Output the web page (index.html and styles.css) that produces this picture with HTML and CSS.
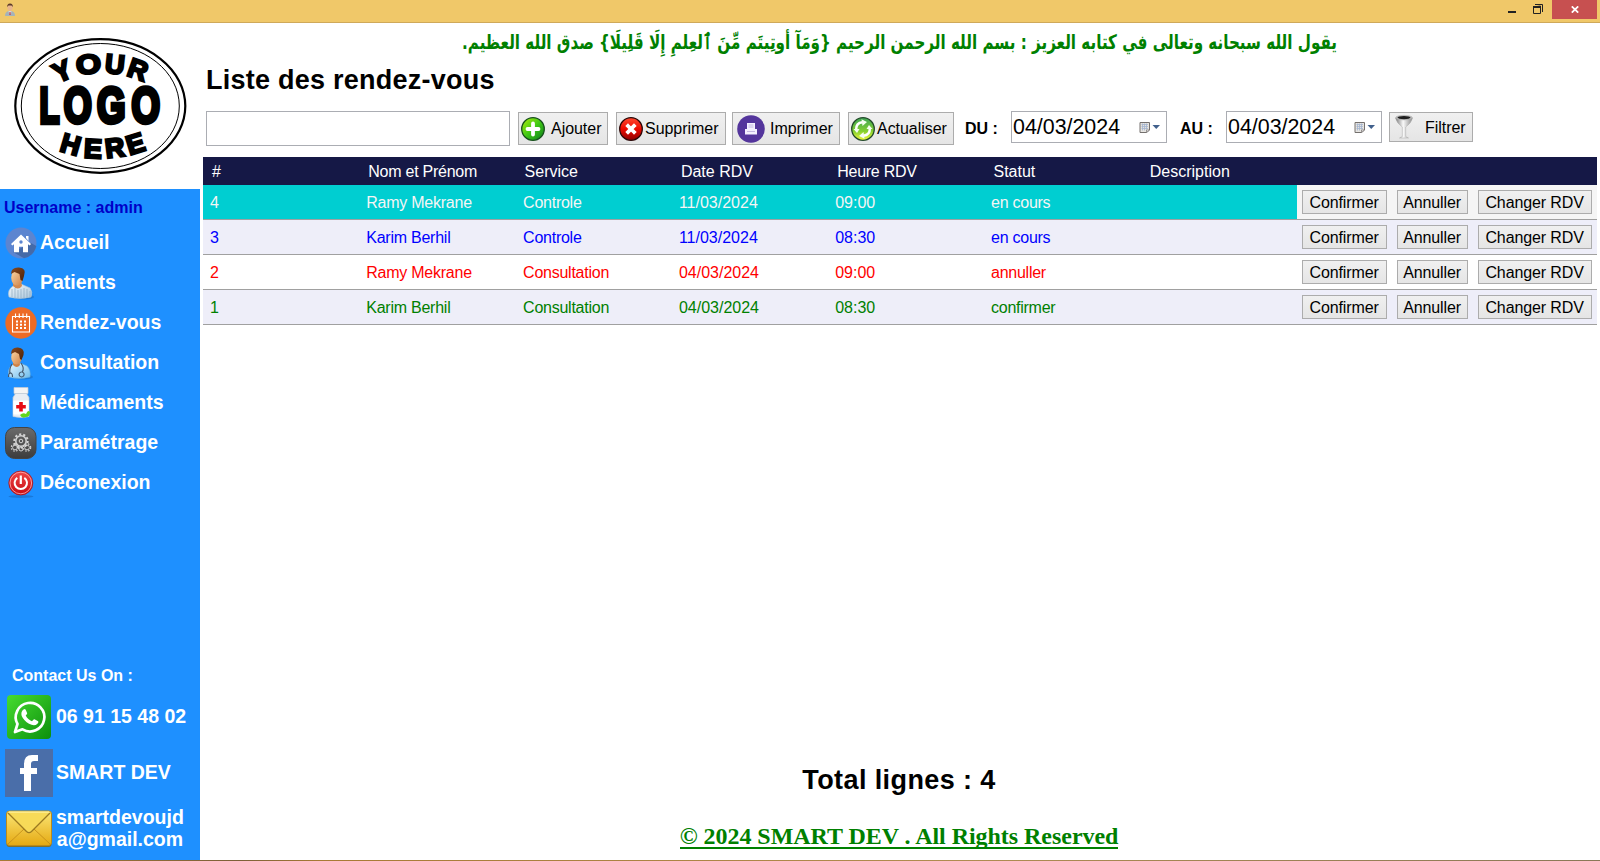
FILE: index.html
```html
<!DOCTYPE html>
<html lang="fr">
<head>
<meta charset="utf-8">
<title>Liste des rendez-vous</title>
<link rel="stylesheet" href="styles.css">
</head>
<body>
<svg class="defs" width="0" height="0" aria-hidden="true">
  <defs>
    <linearGradient id="skin" x1="0" y1="0" x2="1" y2="1"><stop offset="0" stop-color="#fbd9a8"/><stop offset="1" stop-color="#cf8046"/></linearGradient>
    <linearGradient id="hair" x1="0" y1="0" x2="1" y2="1"><stop offset="0" stop-color="#8a4a1e"/><stop offset="1" stop-color="#4a2008"/></linearGradient>
    <linearGradient id="gown" x1="0" y1="0" x2="1" y2="1"><stop offset="0" stop-color="#f4f8fb"/><stop offset="1" stop-color="#a9c6dc"/></linearGradient>
    <linearGradient id="coat" x1="0" y1="0" x2="1" y2="1"><stop offset="0" stop-color="#e6f6ff"/><stop offset="1" stop-color="#6dbcec"/></linearGradient>
    <linearGradient id="dark" x1="0" y1="0" x2="0" y2="1"><stop offset="0" stop-color="#6b6b6b"/><stop offset="1" stop-color="#3c3c3c"/></linearGradient>
    <linearGradient id="red" x1="0" y1="0" x2="0" y2="1"><stop offset="0" stop-color="#f04a4a"/><stop offset="1" stop-color="#c80a12"/></linearGradient>
    <linearGradient id="wa" x1="0" y1="0" x2="1" y2="1"><stop offset="0" stop-color="#46dc30"/><stop offset="1" stop-color="#0c8f0c"/></linearGradient>
    <linearGradient id="mail" x1="0" y1="0" x2="0" y2="1"><stop offset="0" stop-color="#fbe676"/><stop offset="1" stop-color="#e5a912"/></linearGradient>
    <linearGradient id="add" x1="0" y1="0" x2="1" y2="1"><stop offset="0" stop-color="#b4ee10"/><stop offset=".5" stop-color="#3fc814"/><stop offset="1" stop-color="#0a7a1c"/></linearGradient>
    <linearGradient id="del" x1="0" y1="0" x2="0" y2="1"><stop offset="0" stop-color="#ff4a30"/><stop offset=".5" stop-color="#ee0a00"/><stop offset="1" stop-color="#8c0000"/></linearGradient>
    <linearGradient id="ref" x1="0" y1="0" x2="0" y2="1"><stop offset="0" stop-color="#3da455"/><stop offset=".6" stop-color="#84d030"/><stop offset="1" stop-color="#f2fb3c"/></linearGradient>
    <linearGradient id="steel" x1="0" y1="0" x2="1" y2="0"><stop offset="0" stop-color="#777"/><stop offset=".45" stop-color="#fafafa"/><stop offset="1" stop-color="#8a8a8a"/></linearGradient>
    <symbol id="calendar" viewBox="0 0 21 13">
      <path d="M1 1.500h9.500v7.500l-3 2.500H1z" fill="#e6e4e0" stroke="#74706e"/>
      <path d="M2.500 3.500h6.500M2.500 5.500h6.500M2.500 7.500h6.500M3.500 2.500v7M5.500 2.500v7M7.500 2.500v6" stroke="#a3b4cf" stroke-width=".8"/>
      <path d="M7.500 11.500v-2.500h3z" fill="#fff" stroke="#74706e" stroke-width=".7"/>
      <path d="M13.500 4h7.500l-3.750 4z" fill="#41608c"/>
    </symbol>
  </defs>
</svg>

<header class="titlebar">
  <svg class="app-icon" width="10" height="14" viewBox="0 0 10 14">
    <path d="M0 13q0-5 5-5t5 5z" fill="#a5b3ba"/><path d="M3.500 8.500h3L5 12z" fill="#fff"/><path d="M5 9v3" stroke="#b02a3c" stroke-width="1.200"/>
    <ellipse cx="5" cy="4.500" rx="2.600" ry="3.400" fill="#e9b68c"/><path d="M2.200 4Q2 .5 5 .4T7.800 4L6.500 2.500H3.500z" fill="#5c3a2a"/>
  </svg>
  <div class="window-controls">
    <svg width="8" height="22" viewBox="0 0 8 22"><rect y="11" width="8" height="2" fill="#222"/></svg>
    <svg class="restore" width="10" height="22" viewBox="0 0 10 22"><path d="M2 4.500h7.500V12" fill="none" stroke="#222"/><path d="M.5 7v6.500h7V6z" fill="none" stroke="#222"/><path d="M0 7h8" stroke="#222" stroke-width="2"/></svg>
    <span class="close"><svg width="8" height="7" viewBox="0 0 8 7"><path d="M.8.4l6.400 6.200M7.200.4L.8 6.600" stroke="#fff" stroke-width="1.800"/></svg></span>
  </div>
</header>

<div class="app">
  <aside class="sidebar">
    <div class="logo">
      <svg width="200" height="166" viewBox="0 23 200 166">
        <ellipse cx="100.300" cy="106" rx="85" ry="66.800" fill="#fff" stroke="#000" stroke-width="2.200"/>
        <ellipse cx="100.300" cy="106" rx="79" ry="62.500" fill="none" stroke="#000" stroke-width="1"/>
        <g class="logo-curve" text-anchor="middle">
          <text transform="translate(66 79.500) rotate(-24)">Y</text>
          <text transform="translate(89.500 73.500) rotate(-6)" textLength="25" lengthAdjust="spacingAndGlyphs">O</text>
          <text transform="translate(114 73.500) rotate(6)">U</text>
          <text transform="translate(135 78.500) rotate(19)">R</text>
          <text transform="translate(68 153.500) rotate(16)">H</text>
          <text transform="translate(92.500 158) rotate(3)">E</text>
          <text transform="translate(116 157) rotate(-7)">R</text>
          <text transform="translate(138 152.500) rotate(-17)">E</text>
        </g>
        <g class="logo-main">
          <text x="39.500" y="123.300" textLength="20" lengthAdjust="spacingAndGlyphs">L</text>
          <text x="63.800" y="123.300" textLength="28" lengthAdjust="spacingAndGlyphs">O</text>
          <text x="97" y="123.300" textLength="28.500" lengthAdjust="spacingAndGlyphs">G</text>
          <text x="131.500" y="123.300" textLength="28.500" lengthAdjust="spacingAndGlyphs">O</text>
        </g>
      </svg>
    </div>
    <div class="user">Username : admin</div>
    <nav class="menu">
      <a class="item"><svg width="32" height="34" viewBox="0 0 32 34"><circle cx="16" cy="17" r="15.500" fill="#5c85d0"/><path d="M26 17l5.300 3A16 16 0 0 1 19 32.200L8 26z" fill="#456aa8"/><path d="M6 18L16 8.500 26 18l-1.300 1.500-1.700-1.300v8h-5v-5.500h-4v5.500H9v-8L7.300 19.500z" fill="#fff"/><path d="M21 10h2.500v5L21 12z" fill="#fff"/><circle cx="16" cy="16" r="1.700" fill="#5c85d0"/></svg><span>Accueil</span></a>
      <a class="item"><svg width="32" height="34" viewBox="0 0 32 34"><ellipse cx="19" cy="31" rx="10" ry="2.500" fill="#1767b8" opacity=".5"/><path d="M8 20l8-2 9 4q3 4 1 9-11 3-22 0-2-7 4-11z" fill="url(#gown)" stroke="#b4c6d4" stroke-width=".6"/><path d="M7 23v8M10 22v10M13 24v8M16 23v9M19 22v10M22 23v9M25 25v6" stroke="#8daabf" stroke-width=".7"/><path d="M8 20q5 5 9 0l-1-5H8z" fill="#d48a50"/><ellipse cx="12" cy="11.500" rx="5.800" ry="8" fill="url(#skin)"/><path d="M6 8Q6 1 14 1.500T19 10l-1.500 5-2-1-1-6-5-2z" fill="url(#hair)"/></svg><span>Patients</span></a>
      <a class="item"><svg width="32" height="34" viewBox="0 0 32 34"><circle cx="16" cy="17" r="15.700" fill="#ed6b26"/><path d="M7.500 10.500h17v15.500h-17zM10.500 7.500v4.500M14.300 7.500v4.500M18 7.500v4.500M21.700 7.500v4.500" fill="none" stroke="#fff" stroke-width="1.100"/><path d="M11 15.500h2M15 15.500h2M19 15.500h2M11 18.800h2M15 18.800h2M19 18.800h2M11 22.100h2M15 22.100h2M19 22.100h2" stroke="#fff" stroke-width="2"/></svg><span>Rendez-vous</span></a>
      <a class="item"><svg width="32" height="34" viewBox="0 0 32 34"><ellipse cx="18" cy="31" rx="10" ry="2.500" fill="#1767b8" opacity=".5"/><path d="M7 19l8-2 7 3q4 4 3 11-11 3-21 0-2-8 3-12z" fill="url(#coat)" stroke="#6aaedb" stroke-width=".6"/><path d="M8 19q4 4 7 0l-1-5H8z" fill="#cf8146"/><ellipse cx="11.500" cy="11" rx="5.300" ry="7.500" fill="url(#skin)"/><path d="M6 8Q6 1 13 1.500T18.500 9l-2 5-1.500-1-1-5-4-2z" fill="url(#hair)"/><path d="M7 18q-3 5-2 10M16 17q4 6 1 9M3.500 31q0-4 2-4t2 4M16.500 26a2.500 2.500 0 1 0 .2 0" fill="none" stroke="#43566b" stroke-width="1.100"/></svg><span>Consultation</span></a>
      <a class="item"><svg width="32" height="34" viewBox="0 0 32 34"><path d="M9 1.500h14v6H9z" fill="#f4f4f4" stroke="#c5cad2" stroke-width=".7"/><path d="M10.500 7.500h11l2.500 4v19q-8 2-16 0v-19z" fill="#e9edf3" stroke="#c3cbd6" stroke-width=".7"/><path d="M8.300 14.500h15.400v14H8.300z" fill="#fff"/><path d="M16 16v9.600M11.200 20.800h9.600" stroke="#e80c14" stroke-width="3.600"/><path d="M15 29q3-3 6-1 2-5 4-2 0 5-4 5-4 2-6-2z" fill="#62d61a"/></svg><span>Médicaments</span></a>
      <a class="item"><svg width="32" height="34" viewBox="0 0 32 34"><rect x=".5" y="1.500" width="30.500" height="31" rx="9" fill="url(#dark)" stroke="#444"/><g fill="none" stroke="#d4d4d4"><circle cx="16" cy="15" r="5.200" stroke-width="1.500"/><circle cx="16" cy="15" r="6.700" stroke-width="2" stroke-dasharray="2.200 2"/><circle cx="16" cy="15" r="1.800"/><circle cx="10" cy="21.500" r="2.400"/><circle cx="10" cy="21.500" r="3.700" stroke-width="1.200" stroke-dasharray="1.500 1.500"/><circle cx="22" cy="21.500" r="2.400"/><circle cx="22" cy="21.500" r="3.700" stroke-width="1.200" stroke-dasharray="1.500 1.500"/><circle cx="16" cy="23" r="2"/></g></svg><span>Paramétrage</span></a>
      <a class="item"><svg width="32" height="34" viewBox="0 0 32 34"><ellipse cx="16" cy="30.500" rx="12.500" ry="1.500" fill="#1569c0" opacity=".6"/><circle cx="15.800" cy="17" r="12" fill="url(#red)" stroke="#a81822" stroke-width=".8"/><circle cx="15.800" cy="17" r="10.800" fill="none" stroke="#ffb4b4" stroke-width=".8"/><path d="M12.300 11.800a6.200 6.200 0 1 0 7 0" fill="none" stroke="#fff" stroke-width="2"/><path d="M15.800 9.500v8.500" stroke="#fff" stroke-width="2.200"/></svg><span>Déconexion</span></a>
    </nav>
    <section class="contact">
      <div class="contact-title">Contact Us On :</div>
      <div class="contact-row phone"><svg width="48" height="48" viewBox="0 0 48 48"><rect x="2" y="2" width="44" height="44" rx="4" fill="url(#wa)"/><path d="M10 39l2.500-8A14.300 14.300 0 1 1 17.500 36.300z" fill="none" stroke="#fff" stroke-width="2.700" stroke-linejoin="round"/><path d="M18.500 16.500q1.500-1 2.300.5l1.400 3.200q0 1-1.500 2.300 2.200 4.300 6.300 5.800 1.700-2.500 2.500-2.100l3.700 2.100q.8 1-1 2.800-3 2.500-8.200-.3-5-2.700-7.300-7.700-1.200-4.500 1.800-6.600z" fill="#fff"/></svg><span>06 91 15 48 02</span></div>
      <div class="contact-row facebook"><svg width="48" height="48" viewBox="0 0 48 48"><rect width="48" height="48" fill="#4a6ea9"/><path d="M19 42V25h-4v-6h4v-4Q19 6 27 6h6v6h-4q-3 0-3 3v4h6v6h-6v17z" fill="#fff"/></svg><span>SMART DEV</span></div>
      <div class="contact-row email"><svg width="48" height="40" viewBox="0 0 48 40"><rect x="1.500" y="3" width="45" height="35" rx="3" fill="#80702a"/><rect x="1.500" y="2" width="45" height="34.500" rx="3" fill="url(#mail)" stroke="#b98a1c"/><path d="M3 35l16-15M45 35L29 20" stroke="#c58f18" stroke-width=".9"/><path d="M3 4l18.500 18.500q2.500 2.300 5 0L45 4" fill="#f7da58" stroke="#9b7a20" stroke-width="1.300"/><path d="M3.500 3h41" stroke="#fff2a0"/></svg><span>smartdevoujd<br>a@gmail.com</span></div>
    </section>
  </aside>

  <main class="main">
    <div class="verse">
      <svg width="900" height="42" viewBox="0 0 900 42"><text class="verse-text" x="449.500" y="25.500" text-anchor="middle" direction="rtl" textLength="875" lengthAdjust="spacingAndGlyphs">يقول الله سبحانه وتعالى في كتابه العزيز : بسم الله الرحمن الرحيم {وَمَآ أوتِيتَم مِّنَ ٱلعِلمِ إِلَا قَلِيلَا} صدق الله العظيم.</text></svg>
    </div>
    <h1 class="title">Liste des rendez-vous</h1>
    <div class="toolbar">
      <div class="search"></div>
      <button class="tool add"><svg width="24" height="26" viewBox="0 0 24 26"><circle cx="12" cy="13" r="11.300" fill="url(#add)" stroke="#17501c" stroke-width="1.300"/><path d="M12 7.500v11M6.500 13h11" stroke="#fff" stroke-width="3.800" stroke-linecap="round"/></svg><span>Ajouter</span></button>
      <button class="tool delete"><svg width="24" height="26" viewBox="0 0 24 26"><circle cx="12" cy="13" r="11.300" fill="url(#del)" stroke="#2a0808" stroke-width="1.300"/><path d="M9 10l6 6M15 10l-6 6" stroke="#fff" stroke-width="3.800" stroke-linecap="square"/></svg><span>Supprimer</span></button>
      <button class="tool print"><svg width="28" height="28" viewBox="0 0 28 28"><circle cx="14" cy="14" r="13.800" fill="#54359c"/><path d="M10 8h8v6h2v5.500H8V14h2z" fill="#f4f0ff"/><path d="M11.500 10h5M11.500 12h5M10 16.500h8" stroke="#c4b8e2"/></svg><span>Imprimer</span></button>
      <button class="tool refresh"><svg width="24" height="26" viewBox="0 0 24 26"><circle cx="12" cy="13" r="11.300" fill="url(#ref)" stroke="#234a2a" stroke-width="1.300"/><path d="M5.200 13.500Q5 7 11.500 6.300M18.800 12.500Q19 19 12.500 19.700" fill="none" stroke="#fff" stroke-width="2.500"/><path d="M10.500 3.300l5.500 2.700-4.500 4zM13.500 22.700L8 20l4.500-4zM2.500 13h6l-2.500 4zM21.500 13h-6L18 9z" fill="#f5fff0"/></svg><span>Actualiser</span></button>
      <label class="date-label from">DU :</label>
      <div class="date"><span>04/03/2024</span><svg width="21" height="13"><use href="#calendar"/></svg></div>
      <label class="date-label to">AU :</label>
      <div class="date"><span>04/03/2024</span><svg width="21" height="13"><use href="#calendar"/></svg></div>
      <button class="tool filter"><svg width="18" height="26" viewBox="0 0 18 26"><path d="M.5 4q1 5 6.800 9v9.500l-2.800 1.500h9l-2.800-1.500V13Q16.500 9 17.500 4z" fill="url(#steel)" stroke="#aaa" stroke-width=".5"/><ellipse cx="9" cy="3.600" rx="8.300" ry="2.200" fill="#bbb" stroke="#aaa" stroke-width=".6"/><ellipse cx="9" cy="3.600" rx="6.500" ry="1.600" fill="#1e1e1e"/></svg><span>Filtrer</span></button>
    </div>

    <div class="table">
      <div class="row head"><span>#</span><span>Nom et Prénom</span><span>Service</span><span>Date RDV</span><span>Heure RDV</span><span>Statut</span><span>Description</span><span></span></div>
      <div class="row selected"><span>4</span><span>Ramy Mekrane</span><span>Controle</span><span>11/03/2024</span><span>09:00</span><span>en cours</span><span></span><div class="actions"><button>Confirmer</button><button>Annuller</button><button>Changer RDV</button></div></div>
      <div class="row pending alt"><span>3</span><span>Karim Berhil</span><span>Controle</span><span>11/03/2024</span><span>08:30</span><span>en cours</span><span></span><div class="actions"><button>Confirmer</button><button>Annuller</button><button>Changer RDV</button></div></div>
      <div class="row cancelled"><span>2</span><span>Ramy Mekrane</span><span>Consultation</span><span>04/03/2024</span><span>09:00</span><span>annuller</span><span></span><div class="actions"><button>Confirmer</button><button>Annuller</button><button>Changer RDV</button></div></div>
      <div class="row confirmed alt"><span>1</span><span>Karim Berhil</span><span>Consultation</span><span>04/03/2024</span><span>08:30</span><span>confirmer</span><span></span><div class="actions"><button>Confirmer</button><button>Annuller</button><button>Changer RDV</button></div></div>
    </div>

    <footer class="footer">
      <div class="total">Total lignes : 4</div>
      <div class="copyright"><span>© 2024 SMART DEV . All Rights Reserved</span></div>
    </footer>
  </main>
</div>
<div class="bottom-edge"></div>
</body>
</html>
```

FILE: styles.css
```css
* { box-sizing: border-box; }
body {
  margin: 0;
  width: 1600px;
  height: 861px;
  overflow: hidden;
  display: flex;
  flex-direction: column;
  background: #fff;
  color: #000;
  font: 16px "Liberation Sans", Arial, sans-serif;
}
svg { display: block; flex: none; }
.defs { position: absolute; }
button { font: inherit; color: #000; }

/* Window frame */
.titlebar {
  height: 23px;
  flex: none;
  display: flex;
  justify-content: space-between;
  padding: 0 3px 0 5px;
  background: #f0c869;
  border-bottom: 1px solid #cfa95a;
}
.app-icon { margin-top: 3px; }
.window-controls { display: flex; }
.restore { margin: 0 9px 0 17px; }
.close {
  display: flex;
  width: 45px;
  height: 19px;
  align-items: center;
  justify-content: center;
  background: #c75050;
}
.bottom-edge { height: 1px; flex: none; background: linear-gradient(90deg, #a87a34, #7d6038 15%, #a87a34 20%, #b08c50 60%, #8a7858); }
.app { flex: 1; display: flex; min-height: 0; }

/* Sidebar */
.sidebar {
  width: 200px;
  flex: none;
  display: flex;
  flex-direction: column;
  background: #1e90ff;
  color: #fff;
  font-weight: bold;
}
.logo { height: 166px; background: #fff; }
.logo-curve { font: bold 27px "Liberation Sans", sans-serif; stroke: #000; stroke-width: 2.4px; }
.logo-main { font: bold 50px "Liberation Sans", sans-serif; stroke: #000; stroke-width: 4.6px; }
.user { height: 33px; padding: 10px 0 0 4px; line-height: 18px; font-size: 16px; color: #0000c8; }
.menu { display: flex; flex-direction: column; }
.item { display: flex; align-items: center; height: 40px; padding-left: 5px; gap: 3px; font-size: 19.500px; }
.item svg { margin-top: 2px; }
.contact { margin-top: auto; height: 196px; display: flex; flex-direction: column; }
.contact-title { height: 24px; padding-left: 12px; line-height: 24px; font-size: 16px; }
.contact-row { display: flex; align-items: center; gap: 3px; padding-left: 5px; font-size: 19.500px; line-height: 22px; }
.contact-row span { padding-bottom: 2px; }
.phone { height: 58px; }
.facebook { height: 54px; }
.email { height: 57px; text-align: center; }

/* Main area */
.main { flex: 1; display: flex; flex-direction: column; padding: 0 3px; }
.verse { height: 42px; padding-left: 247px; }
.verse svg { overflow: visible; }
.verse-text { font: bold 20px "DejaVu Sans", sans-serif; fill: #008000; }
.title { margin: 0; height: 46px; padding: 1px 0 0 3px; line-height: 29px; font-size: 27px; letter-spacing: .25px; }
.toolbar { display: flex; align-items: flex-start; height: 46px; padding-left: 3px; }
.search { width: 304px; height: 35px; border: 1px solid #abadb3; margin-right: 8px; }
.tool {
  display: flex;
  align-items: center;
  height: 33px;
  margin: 1px 0 0;
  padding: 0 0 0 2px;
  border: 1px solid #acacac;
  background: linear-gradient(#f0f0f0, #e5e5e5);
}
.tool span { letter-spacing: -.04px; }
.add { width: 90px; gap: 6px; margin-right: 8px; }
.delete { width: 110px; gap: 2px; margin-right: 6px; }
.print { width: 108px; gap: 5px; padding-left: 4px; margin-right: 8px; }
.refresh { width: 106px; gap: 2px; margin-right: 11px; }
.filter { width: 84px; height: 30px; padding-left: 5px; gap: 12px; }
.filter span { padding-top: 1px; }
.date-label { font-weight: bold; line-height: 35px; }
.from { width: 46px; }
.to { width: 46px; }
.date { display: flex; align-items: center; justify-content: space-between; width: 156px; height: 32px; padding: 0 6px 0 1px; border: 1px solid #abadb3; font-size: 21.400px; margin-right: 13px; }
.date + .filter { margin-left: -6px; }

/* Appointment list */
.row {
  display: grid;
  grid-template-columns: repeat(7, 156.300px) 1fr;
  height: 35px;
  align-items: stretch;
  border-bottom: 1px solid #a0a0a0;
  line-height: 36px;
}
.row > span { height: 34px; padding-left: 7px; white-space: nowrap; }
.row > span:nth-child(2), .row > span:nth-child(3) { letter-spacing: -.25px; }
.row > span:nth-child(6) { padding-left: 6.500px; letter-spacing: -.25px; }
.row > span:nth-child(3) { padding-left: 7.500px; }
.head { height: 28px; border: 0; line-height: 30px; background: #151846; color: #fff; }
.row.head > span { height: 28px; padding-left: 9px; }
.head > span:nth-child(5) { letter-spacing: -.25px; }
.row.head > span:nth-child(3), .row.head > span:nth-child(6) { letter-spacing: 0; }
.selected > span { background: #00ced1; color: #f5f5f5; }
.selected .actions { background: #f5f5f5; }
.alt { background: #eeeef9; }
.pending { color: #00f; }
.cancelled { color: #f00; }
.confirmed { color: #008000; }
.actions { display: flex; gap: 10px; padding: 5px; }
.actions button { width: 85px; height: 24px; padding: 1px 1px 0 0; line-height: 22px; letter-spacing: -.12px; border: 1px solid #acacac; background: linear-gradient(#f0f0f0, #e5e5e5); }
.actions button:nth-child(2) { width: 71px; }
.actions button:nth-child(3) { width: 114px; }

.footer { margin-top: auto; height: 98px; text-align: center; }
.total { height: 56px; padding: 2px 2px 0 0; line-height: 32px; font-size: 27px; font-weight: bold; letter-spacing: .4px; }
.copyright { padding-right: 2px; font: bold 24px/30px "Liberation Serif", "Times New Roman", serif; letter-spacing: -.04px; color: #008000; }
.copyright span { display: inline-block; height: 31px; border-bottom: 2px solid #008000; line-height: 37px; }
```
